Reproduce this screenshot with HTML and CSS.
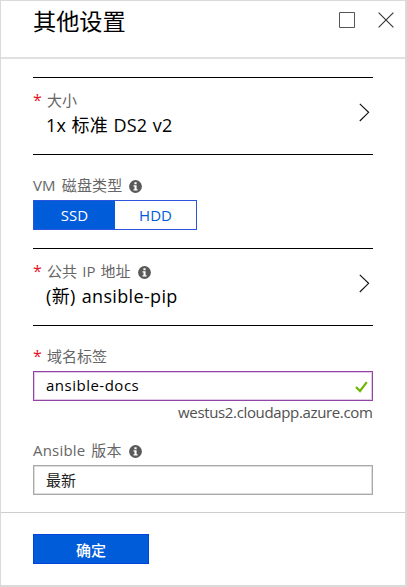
FILE: index.html
```html
<!DOCTYPE html>
<html lang="zh-CN">
<head>
<meta charset="utf-8">
<title>其他设置</title>
<link rel="stylesheet" href="styles.css">
</head>
<body>
<svg class="defs" width="0" height="0" aria-hidden="true">
  <symbol id="info" viewBox="0 0 13 13">
    <circle cx="6.5" cy="6.5" r="6.4" fill="#595959"/>
    <path d="M5.4 2.3h2.2v1.9H5.4zM4.5 5.2h3.1v4h1v1.3H4.5V9.200h1V6.500h-1z" fill="#fff"/>
  </symbol>
  <symbol id="chevron" viewBox="0 0 11 19">
    <path d="M.8.8 9.600 9.300.8 18" fill="none" stroke="#111" stroke-width="1.15"/>
  </symbol>
</svg>
<main class="panel">
  <header class="header">
    <h1>其他设置</h1>
    <div class="actions">
      <svg width="16" height="16" viewBox="0 0 16 16"><path d="M.5.5h15v15H.5z" fill="none" stroke="#555"/></svg>
      <svg width="16" height="16" viewBox="0 0 16 16"><path d="M.6.6l14.800 14.800M15.400.6.6 15.400" fill="none" stroke="#333" stroke-width="1.1"/></svg>
    </div>
  </header>
  <form class="content">
    <section class="selector">
      <div class="selector-text">
        <div class="label"><span class="star">*</span>大小</div>
        <div class="value size-value">1x 标准 DS2 v2</div>
      </div>
      <svg class="chevron"><use href="#chevron"/></svg>
    </section>
    <section class="disk">
      <div class="label disk-label">VM 磁盘类型<svg class="info"><use href="#info"/></svg></div>
      <div class="toggle"><span class="on">SSD</span><span>HDD</span></div>
    </section>
    <section class="selector">
      <div class="selector-text">
        <div class="label ip-label"><span class="star">*</span>公共 IP 地址<svg class="info"><use href="#info"/></svg></div>
        <div class="value ip-value">(新) ansible-pip</div>
      </div>
      <svg class="chevron"><use href="#chevron"/></svg>
    </section>
    <section class="domain">
      <div class="label"><span class="star">*</span>域名标签</div>
      <div class="input valid"><span>ansible-docs</span>
        <svg width="13" height="12" viewBox="0 0 13 12"><path d="M1 6l4 4L11.800 1.200" fill="none" stroke="#70b603" stroke-width="2.200"/></svg>
      </div>
      <div class="suffix">westus2.cloudapp.azure.com</div>
    </section>
    <section class="version">
      <div class="label version-label">Ansible 版本<svg class="info"><use href="#info"/></svg></div>
      <div class="input">最新</div>
    </section>
  </form>
  <footer class="footer"><button type="button">确定</button></footer>
</main>
</body>
</html>
```
FILE: styles.css
```css
* { box-sizing: border-box; }
body {
  margin: 0;
  background: #fff;
  color: #000;
  font: 15px "Open Sans", "Noto Sans CJK SC", sans-serif;
}
.defs { position: absolute; }
svg { display: block; flex: none; }
.panel {
  width: 407px;
  height: 587px;
  display: flex;
  flex-direction: column;
  border: solid #dadada;
  border-width: 1px 2px 2px 1px;
}
.header {
  height: 58px;
  display: flex;
  justify-content: space-between;
  border-bottom: 2px solid #e0e0e0;
  padding: 4px 11px 0 32px;
}
h1 {
  margin: 0;
  font-size: 23.2px;
  font-weight: 400;
  line-height: 32px;
}
.actions { display: flex; gap: 23px; padding-top: 7px; }
.content {
  width: 339.5px;
  height: 453px;
  margin-left: 32px;
  padding-top: 18px;
}
.selector {
  height: 78px;
  display: flex;
  justify-content: space-between;
  border: solid #000;
  border-width: 1px 0;
}
.selector-text { padding-top: 11px; }
.label {
  display: flex;
  align-items: center;
  height: 22px;
  line-height: 22px;
  color: #666;
  white-space: pre;
}
.star {
  width: 14px;
  color: #e81123;
  font-size: 16px;
}
.info { width: 13px; height: 13px; margin: 3px 0 0 7px; }
.disk-label { letter-spacing: .15px; word-spacing: 2px; }
.ip-label { word-spacing: 1.3px; }
.version-label { letter-spacing: .2px; word-spacing: 1.8px; }
.value {
  height: 28px;
  padding-left: 13px;
  font-size: 18px;
  line-height: 28px;
  white-space: pre;
}
.size-value { letter-spacing: .2px; word-spacing: .6px; }
.ip-value { letter-spacing: .35px; word-spacing: 1px; }
.chevron { width: 11px; height: 19px; margin: 25px 3px 0 0; }
.disk { height: 93px; padding-top: 19px; }
.toggle {
  display: flex;
  width: 164px;
  height: 30px;
  margin-top: 4px;
  border: 1px solid #2b55dc;
  color: #015cda;
  line-height: 29px;
  text-align: center;
}
.toggle span { flex: 1; }
.toggle .on { background: #015cda; color: #fff; }
.domain { height: 105px; padding-top: 19px; }
.input {
  display: flex;
  align-items: center;
  justify-content: space-between;
  height: 30px;
  margin-top: 4px;
  padding: 0 4px 2px 12px;
  border: 1px solid #aaa;
  box-shadow: inset 0 0 0 1px #dcdcdc;
}
.version .input { padding-bottom: 1px; color: #222; }
.valid { border-color: #9146a5; box-shadow: inset 0 0 0 1px #e2c9e8; letter-spacing: .5px; }
.valid svg { margin-top: 3px; }
.suffix {
  color: #505050;
  line-height: 22px;
  text-align: right;
  letter-spacing: -.35px;
}
.version { padding-top: 8px; }
.footer {
  flex: 1;
  border-top: 1px solid #cdcdcd;
  padding: 21px 0 0 32px;
}
button {
  display: block;
  width: 116px;
  height: 30px;
  padding: 0;
  border: 1px solid #0042dc;
  background: #015cda;
  color: #fff;
  font: 500 15px/30px "Noto Sans CJK SC", sans-serif;
}
```
